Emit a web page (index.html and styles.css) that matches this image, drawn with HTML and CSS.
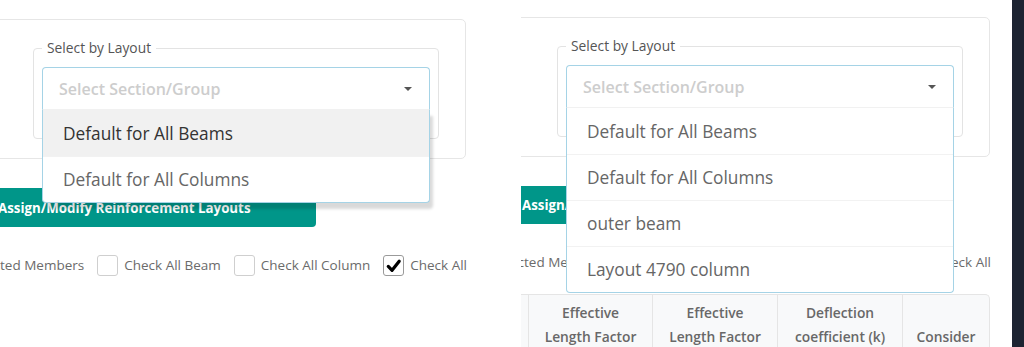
FILE: index.html
```html
<!DOCTYPE html>
<html lang="en">
<head>
<meta charset="utf-8">
<title>Select by Layout</title>
<link rel="stylesheet" href="styles.css">
</head>
<body>
<div class="screens">
  <section class="shot shot-a">
    <div class="page">
      <div class="card">
        <fieldset class="group">
          <legend>Select by Layout</legend>
          <div class="select">
            <div class="control">
              <span class="placeholder">Select Section/Group</span>
              <span class="caret"></span>
            </div>
            <ul class="menu menu-shadow">
              <li class="option active">Default for All Beams</li>
              <li class="option">Default for All Columns</li>
            </ul>
          </div>
        </fieldset>
      </div>
      <button class="btn">Assign/Modify Reinforcement Layouts</button>
      <div class="checks">
        <label class="check"><span class="box"></span><span>Check Selected Members</span></label>
        <label class="check"><span class="box"></span><span>Check All Beam</span></label>
        <label class="check"><span class="box"></span><span>Check All Column</span></label>
        <label class="check"><span class="box checked"><svg viewBox="0 0 20 20" width="20" height="20"><path d="M4.5 10.5 L8.5 14.5 L16 5" fill="none" stroke="#000" stroke-width="3.4" stroke-linecap="round" stroke-linejoin="round"/></svg></span><span>Check All</span></label>
      </div>
    </div>
  </section>

  <section class="shot shot-b">
    <div class="page">
      <div class="card">
        <fieldset class="group">
          <legend>Select by Layout</legend>
          <div class="select">
            <div class="control">
              <span class="placeholder">Select Section/Group</span>
              <span class="caret"></span>
            </div>
            <ul class="menu">
              <li class="option">Default for All Beams</li>
              <li class="option">Default for All Columns</li>
              <li class="option">outer beam</li>
              <li class="option">Layout 4790 column</li>
            </ul>
          </div>
        </fieldset>
      </div>
      <button class="btn btn-b">Assign/Modify Reinforcement Layouts</button>
      <div class="checks">
        <label class="check"><span class="box"></span><span>Check Selected Members</span></label>
        <label class="check"><span class="box"></span><span>Check All Beam</span></label>
        <label class="check"><span class="box"></span><span>Check All Column</span></label>
        <label class="check"><span class="box checked"><svg viewBox="0 0 20 20" width="20" height="20"><path d="M4.5 10.5 L8.5 14.5 L16 5" fill="none" stroke="#000" stroke-width="3.4" stroke-linecap="round" stroke-linejoin="round"/></svg></span><span>Check All</span></label>
      </div>
      <table class="grid">
        <thead>
          <tr>
            <th class="c0"></th>
            <th class="c1">Effective<br>Length Factor<br>(Ky)</th>
            <th class="c2">Effective<br>Length Factor<br>(Kz)</th>
            <th class="c3">Deflection<br>coefficient (k)<br>&nbsp;</th>
            <th class="c4">Consider</th>
          </tr>
        </thead>
      </table>
    </div>
  </section>

  <aside class="sidebar"></aside>
</div>
</body>
</html>
```

FILE: styles.css
```css
* { box-sizing: border-box; }

html, body {
  margin: 0;
  padding: 0;
  height: 347px;
  overflow: hidden;
  background: #fff;
  font-family: "Open Sans", "Noto Sans", Arial, sans-serif;
}

.screens {
  display: flex;
  height: 347px;
}

.shot {
  overflow: hidden;
  height: 347px;
  flex: none;
}

.shot-a { width: 521px; }
.shot-b { width: 491px; }

.sidebar {
  flex: 1;
  background: #1d2432;
}

.page {
  width: 478px;
  display: flex;
  flex-direction: column;
}

.shot-a .page { margin-left: -12px; padding-top: 19px; }
.shot-b .page { margin-left: -9px; padding-top: 17px; }

.card {
  border: 1px solid #e6e6e6;
  border-radius: 5px;
  padding: 19px 26px 19px 44px;
}

.group {
  margin: 0;
  min-width: 0;
  border: 1px solid #e3e3e3;
  border-radius: 4px;
  padding: 10px 8px 28px 8px;
}

.group legend {
  padding: 0 5px;
  font-size: 13.8px;
  line-height: 18px;
  color: #555;
}

.select {
  position: relative;
}

.control {
  height: 43px;
  border: 1px solid #a5d3e6;
  border-bottom-color: #f1f1f1;
  border-radius: 4px 4px 0 0;
  display: flex;
  align-items: center;
  justify-content: space-between;
  padding: 0 17px 0 16px;
}

.placeholder {
  font-size: 16px;
  font-weight: 600;
  color: #cdcdcd;
}

.caret {
  width: 0;
  height: 0;
  border-left: 4px solid transparent;
  border-right: 4px solid transparent;
  border-top: 4px solid #555;
}

.menu {
  position: absolute;
  z-index: 5;
  top: 100%;
  left: 0;
  right: 0;
  margin: 0;
  padding: 0;
  list-style: none;
  background: #fff;
  border: 1px solid #a5d3e6;
  border-top: none;
  border-radius: 0 0 4px 4px;
}

.menu-shadow {
  box-shadow: 3px 6px 3px rgba(0, 0, 0, 0.15);
}

.option {
  height: 46px;
  display: flex;
  align-items: center;
  padding: 0 20px;
  font-size: 17.3px;
  color: #666;
}

.option + .option {
  border-top: 1px solid #f2f2f2;
}

.option.active {
  background: #f1f1f1;
  color: #333;
}

.btn {
  margin-top: 29px;
  width: 328px;
  height: 39px;
  border: none;
  border-radius: 4px;
  background: #009689;
  color: #fff;
  font-family: inherit;
  font-size: 13.3px;
  font-weight: 700;
  text-align: left;
  padding: 0 10px;
}

.btn-b {
  height: 38px;
}

.checks {
  margin-top: 28px;
  display: flex;
  justify-content: flex-end;
  align-items: center;
  gap: 13px;
  white-space: nowrap;
  margin-right: -1px;
}

.check {
  display: flex;
  align-items: center;
  gap: 6px;
  font-size: 13.5px;
  line-height: 21px;
  color: #6b6b6b;
  flex: none;
}

.box {
  width: 21px;
  height: 21px;
  border: 1px solid #cfcfcf;
  border-radius: 3px;
  background: #fff;
  display: flex;
  align-items: center;
  justify-content: center;
}

.box.checked {
  border-color: #9a9a9a;
}

.grid {
  margin-top: 21px;
  width: 478px;
  border-collapse: separate;
  border-spacing: 0;
  table-layout: fixed;
}

.grid th {
  background: #f8f9fa;
  border-top: 1px solid #e5e5e5;
  border-right: 1px solid #e5e5e5;
  font-size: 13.8px;
  font-weight: 600;
  line-height: 24px;
  color: #686868;
  padding: 6px 2px;
  text-align: center;
  vertical-align: middle;
  white-space: nowrap;
  overflow: hidden;
}

.grid th:last-child {
  border-top-right-radius: 5px;
}

.c0 { width: 17px; }
.c1 { width: 124px; }
.c2 { width: 125px; }
.c3 { width: 125px; }
.c4 { width: 87px; }
```
